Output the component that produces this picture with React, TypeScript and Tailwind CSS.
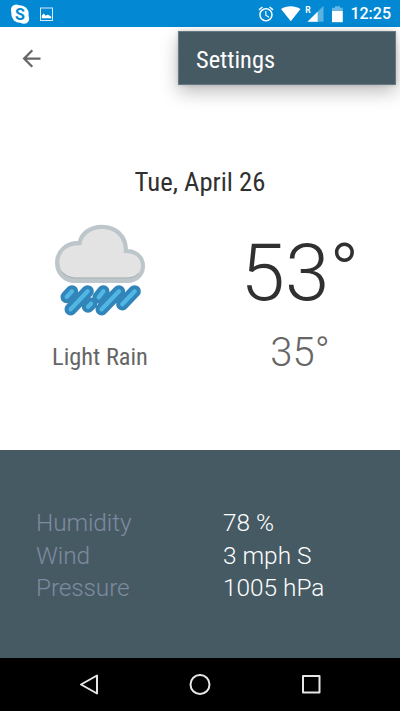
function StatusBar() {
  return (
    <div className="flex h-[27px] items-center bg-[#0388d3] text-white">
      <svg className="ml-[10px] h-[20px] w-[20px]" viewBox="0 0 20 20">
        <g fill="#fff">
          <circle cx="10" cy="10" r="8.700" />
          <circle cx="6.200" cy="5.700" r="5.300" />
          <circle cx="13.900" cy="14.500" r="5.300" />
        </g>
        <text x="10" y="15.600" textAnchor="middle" fontSize="16" fontWeight="700" fontFamily="Roboto" fill="#0388d3">S</text>
      </svg>
      <svg className="ml-[9px] h-[16px] w-[16px]" viewBox="0 0 16 16">
        <rect x="1.500" y="2" width="12" height="12.500" fill="none" stroke="#d5ebf8" strokeWidth="1" />
        <path d="M2.800 12.300V9.600l2-2 2 2.200 1.500-1 1.300.2 2.700 1.800v1.500z" fill="#fff" />
      </svg>
      <svg className="ml-auto h-[18px] w-[18px]" viewBox="0 0 24 24" fill="#fff">
        <path d="M22 5.72l-4.6-3.86-1.29 1.53 4.6 3.86L22 5.72zM7.88 3.39L6.6 1.86 2 5.71l1.29 1.53 4.59-3.85zM12.5 8H11v6l4.75 2.85.75-1.23-4-2.37V8zM12 4c-4.97 0-9 4.03-9 9s4.02 9 9 9a9 9 0 000-18zm0 16c-3.87 0-7-3.13-7-7s3.13-7 7-7 7 3.13 7 7-3.13 7-7 7z" />
      </svg>
      <svg className="ml-[6px] h-[20px] w-[50px]" viewBox="0 0 50 20" fill="#fff">
        <path d="M0 5C5.800 1.200 13.500 1.200 19.500 5L9.800 17.300z" />
        <path d="M42.500 1.800V17.800H26.500z" opacity=".35" />
        <path d="M36.600 7.700V17.800H26.500z" />
        <text x="24.300" y="9" fontSize="8.500" fontWeight="700" fontFamily="Roboto">R</text>
      </svg>
      <svg className="-ml-px h-[20px] w-[14px]" viewBox="0 0 14 20" fill="#fff">
        <path d="M2 3.800h3V2.300h5v1.500h2.800V7H2z" opacity=".4" />
        <path d="M2 7h10.800v11.200H2z" />
      </svg>
      <span className="mr-[9px] ml-[6px] pt-px text-[16px] leading-[26px] font-medium">12:25</span>
    </div>
  );
}

function RainCloud() {
  const drops = "M80 246L96 229M92 283L143 229M144 275L153 266M176 247L190 229M185 283L237 229M247 268L284 229";
  return (
    <svg className="h-[110px] w-[120px]" viewBox="0 0 360 330">
      <path
        d="M104 200C72 200 49 174 49 143C49 108 78 80 117 82C122 54 150 33 186 33C228 33 261 62 260 106C289 105 311 126 311 153C311 180 290 200 262 200Z"
        fill="#bdc6ca" stroke="#bdc6ca" strokeWidth="8" strokeLinejoin="round"
      />
      <path
        d="M103 188C77 185 58 168 58 142C58 111 82 88 124 91C126 64 151 42 186 42C226 42 255 70 251 114C282 112 303 128 303 152C303 173 288 188 265 188Z"
        fill="#e3e3e3"
      />
      <path d="M66 172Q82 188 103 189H265Q285 188 296 175" fill="none" stroke="#a8afb2" strokeWidth="3" />
      <g fill="none" strokeLinecap="round">
        <path d={drops} stroke="#3185b9" strokeWidth="37" />
        <path d={drops} stroke="#50b6e3" strokeWidth="13" />
      </g>
    </svg>
  );
}

const details = [
  ["Humidity", "78 %"],
  ["Wind", "3 mph S"],
  ["Pressure", "1005 hPa"],
];

const condensed = "font-['Roboto_Condensed',Roboto,sans-serif] [font-stretch:75%]";

export default function App() {
  return (
    <div className="relative flex h-[711px] w-[400px] flex-col overflow-hidden bg-white font-[Roboto,sans-serif]">
      <StatusBar />
      <header className="flex h-[62px] items-center pl-[18px]">
        <svg className="h-[27px] w-[27px]" viewBox="0 0 24 24" fill="#666">
          <path d="M20 11H7.830l5.590-5.590L12 4l-8 8 8 8 1.410-1.410L7.830 13H20v-2z" />
        </svg>
      </header>
      <div className={`absolute top-[31px] left-[178px] flex h-[54px] w-[218px] items-center border border-[#697981] bg-[#465a64] pt-[4px] pl-[17px] text-[24.4px] text-white shadow-[0_7px_18px_rgba(0,0,0,0.26),0_0_4px_rgba(0,0,0,0.16)] ${condensed}`}>
        Settings
      </div>
      <main className="flex h-[361px] flex-col pt-[75px]">
        <h1 className={`text-center text-[26.7px] leading-9 font-[370] text-[#303030] ${condensed}`}>Tue, April 26</h1>
        <div className="grid grid-cols-2 pt-[15px]">
          <section className="flex flex-col items-center">
            <RainCloud />
            <p className={`mt-[16px] text-[24.4px] leading-8 font-[370] text-[#666] ${condensed}`}>Light Rain</p>
          </section>
          <section className="flex flex-col items-center">
            <p className="mt-[11px] text-[80px] leading-[94px] font-light text-[#303030]">53°</p>
            <p className="mt-[9px] text-[40px] leading-[47px] font-light text-[#666]">35°</p>
          </section>
        </div>
      </main>
      <dl className="flex h-[208px] flex-col bg-[#465a64] pt-[57px] pl-[36px] text-[24.4px] leading-[32.5px] font-light">
        {details.map(([label, value]) => (
          <div className="flex" key={label}>
            <dt className="w-[187px] tracking-[-0.1px] text-[#7e8a9f]">{label}</dt>
            <dd className="text-white">{value}</dd>
          </div>
        ))}
      </dl>
      <nav className="h-[53px] bg-black">
        <svg className="h-[53px] w-[400px]" viewBox="0 0 400 53" fill="none" stroke="#e6e6e6" strokeWidth="2" strokeLinejoin="round">
          <path d="M97 17.500V35.500L81 26.500Z" />
          <circle cx="200" cy="26.500" r="9.500" />
          <rect x="303" y="18" width="16.500" height="16.500" />
        </svg>
      </nav>
    </div>
  );
}
